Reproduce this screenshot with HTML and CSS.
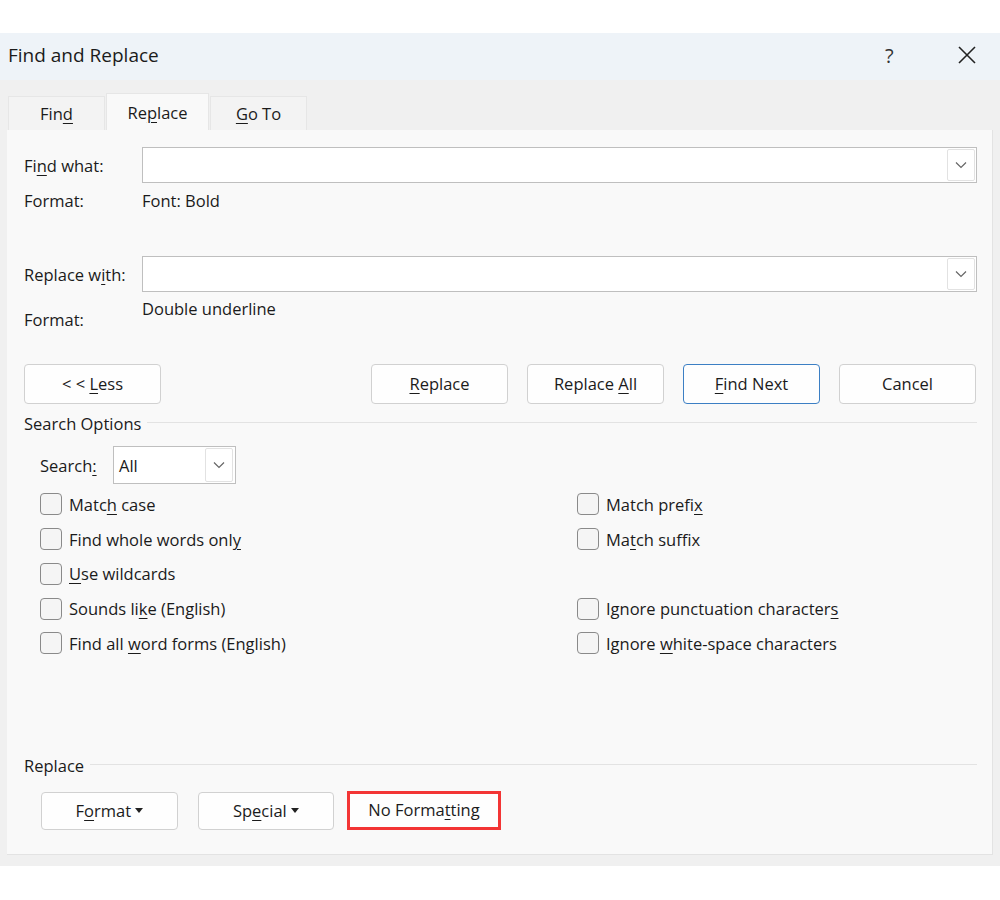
FILE: index.html
```html
<!DOCTYPE html>
<html lang="en">

<head>
  <meta charset="UTF-8">
  <meta name="viewport" content="width=device-width, initial-scale=1.0">
  <title>Find and Replace</title>
  <link rel="stylesheet" href="styles.css">
</head>

<body>
  <!-- dialog -->
  <div class="dialog">
    <div class="titlebar">
      <div class="title">Find and Replace</div>
      <div class="help">?</div>
      <div class="close">
        <svg width="18" height="18" viewBox="0 0 18 18"><path d="M1 1L17 17M17 1L1 17" stroke="#222" stroke-width="1.6" fill="none"/></svg>
      </div>
    </div>

    <div class="tabs">
      <div class="tab">Fin<u>d</u></div>
      <div class="tab active">Re<u>p</u>lace</div>
      <div class="tab"><u>G</u>o To</div>
    </div>

    <div class="panel">
      <div class="field">
        <div class="label">Fi<u>n</u>d what:</div>
        <div class="combo">
          <div class="combo-text"></div>
          <div class="arrow"><svg width="12" height="8" viewBox="0 0 12 8"><path d="M1 1.5L6 6.5L11 1.5" stroke="#666" stroke-width="1.2" fill="none"/></svg></div>
        </div>
      </div>
      <div class="format-row">
        <div class="label">Format:</div>
        <div>Font: Bold</div>
      </div>

      <div class="field second">
        <div class="label">Replace w<u>i</u>th:</div>
        <div class="combo">
          <div class="combo-text"></div>
          <div class="arrow"><svg width="12" height="8" viewBox="0 0 12 8"><path d="M1 1.5L6 6.5L11 1.5" stroke="#666" stroke-width="1.2" fill="none"/></svg></div>
        </div>
      </div>
      <div class="format-row lower">
        <div class="label">Format:</div>
        <div class="value">Double underline</div>
      </div>

      <div class="buttons">
        <div class="btn">&lt; &lt; <u>L</u>ess</div>
        <div class="btn-group">
          <div class="btn"><u>R</u>eplace</div>
          <div class="btn">Replace <u>A</u>ll</div>
          <div class="btn primary"><u>F</u>ind Next</div>
          <div class="btn">Cancel</div>
        </div>
      </div>

      <div class="legend">
        <span>Search Options</span>
        <div class="rule"></div>
      </div>

      <div class="search-row">
        <div class="search-label">Search<u>:</u></div>
        <div class="select">
          <div class="select-text">All</div>
          <div class="arrow"><svg width="12" height="8" viewBox="0 0 12 8"><path d="M1 1.5L6 6.5L11 1.5" stroke="#666" stroke-width="1.2" fill="none"/></svg></div>
        </div>
      </div>

      <div class="options">
        <div class="check"><span class="box"></span><span>Matc<u>h</u> case</span></div>
        <div class="check"><span class="box"></span><span>Match prefi<u>x</u></span></div>
        <div class="check"><span class="box"></span><span>Find whole words onl<u>y</u></span></div>
        <div class="check"><span class="box"></span><span>Ma<u>t</u>ch suffix</span></div>
        <div class="check"><span class="box"></span><span><u>U</u>se wildcards</span></div>
        <div class="check"></div>
        <div class="check"><span class="box"></span><span>Sounds li<u>k</u>e (English)</span></div>
        <div class="check"><span class="box"></span><span>Ignore punctuation character<u>s</u></span></div>
        <div class="check"><span class="box"></span><span>Find all <u>w</u>ord forms (English)</span></div>
        <div class="check"><span class="box"></span><span>Ignore <u>w</u>hite-space characters</span></div>
      </div>

      <div class="legend bottom">
        <span>Replace</span>
        <div class="rule"></div>
      </div>

      <div class="bottom-buttons">
        <div class="btn small">F<u>o</u>rmat <span class="caret"></span></div>
        <div class="btn small">Sp<u>e</u>cial <span class="caret"></span></div>
        <div class="btn small marked">No Forma<u>t</u>ting</div>
      </div>
    </div>
  </div>
</body>

</html>
```

FILE: styles.css
```css
body {
  margin: 0;
  background-color: #ffffff;
  font-family: 'Open Sans', 'Noto Sans', Arial, sans-serif;
  font-size: 16.5px;
  color: #1b1b1b;
}

u {
  text-underline-offset: 3px;
  text-decoration-thickness: 1px;
}

.dialog {
  margin-top: 33px;
  height: 833px;
  background-color: #f0f0f0;
}

.titlebar {
  height: 47px;
  background-color: #eef3f8;
  display: flex;
  align-items: center;
  padding-left: 8px;
  padding-bottom: 3px;
  box-sizing: border-box;
}

.title {
  font-size: 19px;
  flex: 1;
}

.help {
  font-size: 20px;
  color: #333;
  width: 73px;
}

.close {
  width: 42px;
  display: flex;
  align-items: center;
}

.tabs {
  display: flex;
  padding-left: 8px;
  height: 50px;
  align-items: flex-end;
}

.tab {
  width: 97px;
  height: 34px;
  line-height: 34px;
  text-align: center;
  background-color: #f3f3f3;
  border: 1px solid #e6e6e6;
  border-bottom: none;
  box-sizing: border-box;
}

.tab.active {
  width: 103px;
  height: 37px;
  line-height: 37px;
  background-color: #f9f9f9;
  border-color: #e6e6e6;
  margin: 0 1px;
}

.panel {
  margin: 0 7px;
  height: 725px;
  background-color: #f9f9f9;
  border-right: 1px solid #e3e3e3;
  border-bottom: 1px solid #e3e3e3;
  box-sizing: border-box;
  padding: 17px 15px 0 17px;
}

.field {
  display: grid;
  grid-template-columns: 118px 1fr;
  align-items: center;
  height: 36px;
}

.field.second {
  margin-top: 45px;
  height: 35px;
}

.combo {
  height: 36px;
  background-color: #ffffff;
  border: 1px solid #bfbfbf;
  box-sizing: border-box;
  display: flex;
  align-items: center;
  justify-content: flex-end;
  padding-right: 1px;
}

.combo .arrow {
  width: 28px;
  height: 32px;
}

.arrow {
  display: flex;
  align-items: center;
  justify-content: center;
  border: 1px solid #e2e2e2;
  border-radius: 2px;
  box-sizing: border-box;
  background-color: #ffffff;
}

.format-row {
  display: grid;
  grid-template-columns: 118px 1fr;
  margin-top: 8px;
  height: 20px;
  line-height: 20px;
}

.format-row.lower {
  margin-top: 8px;
}

.format-row.lower .label {
  padding-top: 11px;
}

.buttons {
  display: flex;
  margin-top: 45px;
}

.btn-group {
  display: flex;
  margin-left: auto;
  gap: 19px;
  padding-right: 1px;
}

.btn {
  width: 137px;
  height: 40px;
  line-height: 38px;
  text-align: center;
  background-color: #fefefe;
  border: 1px solid #d1d1d1;
  border-radius: 4px;
  box-sizing: border-box;
}

.btn.primary {
  border-color: #3c7fc4;
}

.legend {
  display: flex;
  align-items: center;
  margin-top: 8px;
  height: 22px;
}

.legend .rule {
  flex: 1;
  height: 1px;
  background-color: #e3e3e3;
  margin-left: 6px;
  margin-top: -1px;
}

.search-row {
  display: flex;
  align-items: center;
  margin-top: 12px;
  padding-left: 16px;
  height: 38px;
}

.search-label {
  width: 73px;
}

.select {
  width: 123px;
  height: 38px;
  background-color: #ffffff;
  border: 1px solid #bfbfbf;
  box-sizing: border-box;
  display: flex;
  align-items: center;
  padding: 0 2px 0 5px;
}

.select-text {
  flex: 1;
}

.select .arrow {
  width: 28px;
  height: 34px;
}

.options {
  display: grid;
  grid-template-columns: 537px 1fr;
  grid-auto-rows: 34.75px;
  margin-top: 3px;
  padding-left: 16px;
}

.check {
  display: flex;
  align-items: center;
}

.box {
  width: 22px;
  height: 22px;
  border: 1px solid #8a8a8a;
  border-radius: 4px;
  box-sizing: border-box;
  background-color: #f5f5f5;
  margin-right: 7px;
}

.legend.bottom {
  margin-top: 94px;
}

.legend.bottom .rule {
  margin-top: -2px;
}

.bottom-buttons {
  display: flex;
  gap: 20px;
  margin-top: 15px;
  padding-left: 17px;
}

.btn.small {
  height: 38px;
  line-height: 36px;
  width: 137px;
}

.btn.small:nth-child(2) {
  width: 136px;
}

.btn.marked {
  width: 154px;
  margin-left: -7px;
  border: 3px solid #f33535;
  border-radius: 0;
  line-height: 32px;
  height: 39px;
  margin-top: -1px;
}

.caret {
  display: inline-block;
  width: 0;
  height: 0;
  border-left: 4px solid transparent;
  border-right: 4px solid transparent;
  border-top: 5px solid #222;
  vertical-align: middle;
  margin-left: 0;
  margin-top: -4px;
}
```
